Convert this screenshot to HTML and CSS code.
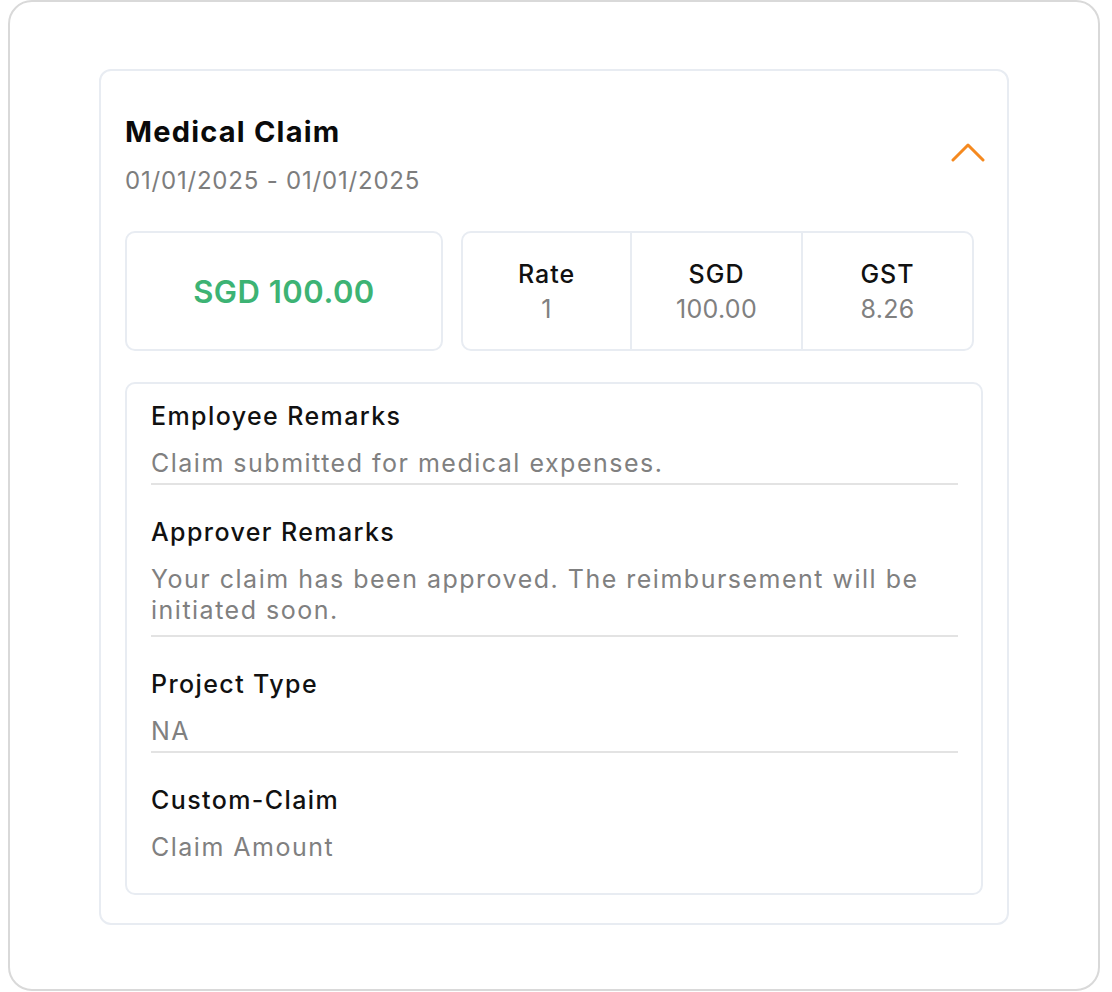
FILE: index.html
```html
<!DOCTYPE html>
<html lang="en">
<head>
<meta charset="utf-8">
<title>Medical Claim</title>
<link rel="stylesheet" href="styles.css">
</head>
<body>
<div class="frame">
  <section class="claim-card">
    <header class="claim-header">
      <div class="claim-heading">
        <h1 class="claim-title">Medical Claim</h1>
        <div class="claim-dates">01/01/2025 - 01/01/2025</div>
      </div>
      <svg class="chevron" width="34" height="19" viewBox="0 0 34 19" aria-hidden="true">
        <polyline points="2,17 17,2 32,17" fill="none" stroke="#f5891f" stroke-width="3" stroke-linecap="round" stroke-linejoin="round"/>
      </svg>
    </header>

    <div class="summary-row">
      <div class="amount-box">SGD 100.00</div>
      <div class="stats-box">
        <div class="stat">
          <div class="stat-label">Rate</div>
          <div class="stat-value">1</div>
        </div>
        <div class="stat">
          <div class="stat-label">SGD</div>
          <div class="stat-value">100.00</div>
        </div>
        <div class="stat">
          <div class="stat-label">GST</div>
          <div class="stat-value">8.26</div>
        </div>
      </div>
    </div>

    <div class="details-box">
      <div class="field">
        <div class="field-label">Employee Remarks</div>
        <div class="field-value">Claim submitted for medical expenses.</div>
      </div>
      <div class="field field-multi">
        <div class="field-label">Approver Remarks</div>
        <div class="field-value">Your claim has been approved. The reimbursement will be initiated soon.</div>
      </div>
      <div class="field">
        <div class="field-label">Project Type</div>
        <div class="field-value">NA</div>
      </div>
      <div class="field field-last">
        <div class="field-label">Custom-Claim</div>
        <div class="field-value">Claim Amount</div>
      </div>
    </div>
  </section>
</div>
</body>
</html>
```

FILE: styles.css
```css
* {
  box-sizing: border-box;
}

html, body {
  margin: 0;
  padding: 0;
  background: #ffffff;
}

body {
  font-family: "Inter", "Liberation Sans", sans-serif;
  color: #111111;
}

.frame {
  margin: 0 12px 0 8px;
  height: 991px;
  border: 2px solid #d9d9d9;
  border-radius: 24px;
  padding-top: 67px;
  background: #ffffff;
}

.claim-card {
  width: 910px;
  margin: 0 auto;
  border: 2px solid #e8ecf2;
  border-radius: 12px;
  padding: 43px 24px 28px 24px;
}

.claim-header {
  display: flex;
  justify-content: space-between;
  align-items: center;
}

.claim-title {
  margin: 0;
  font-size: 29px;
  line-height: 36px;
  font-weight: 700;
  letter-spacing: 1.2px;
  color: #0a0a0a;
}

.claim-dates {
  margin-top: 15px;
  font-size: 24px;
  line-height: 32px;
  letter-spacing: 0.8px;
  color: #7d7d7d;
}

.chevron {
  display: block;
  margin-right: -2px;
  margin-bottom: 6px;
}

.summary-row {
  display: grid;
  grid-template-columns: 318px 1fr;
  column-gap: 18px;
  padding-right: 9px;
  margin-top: 34px;
}

.amount-box {
  height: 120px;
  border: 2px solid #e8ecf2;
  border-radius: 10px;
  display: flex;
  align-items: center;
  justify-content: center;
  font-size: 31px;
  font-weight: 600;
  letter-spacing: 0.5px;
  color: #3db374;
}

.stats-box {
  height: 120px;
  border: 2px solid #e8ecf2;
  border-radius: 10px;
  display: grid;
  grid-template-columns: 167px 1fr 1fr;
}

.stat {
  display: flex;
  flex-direction: column;
  align-items: center;
  justify-content: center;
}

.stat + .stat {
  border-left: 2px solid #e8ecf2;
}

.stat-label {
  font-size: 25px;
  line-height: 30px;
  font-weight: 500;
  letter-spacing: 1px;
  color: #111111;
}

.stat-value {
  margin-top: 5px;
  font-size: 25px;
  line-height: 30px;
  letter-spacing: 0.3px;
  color: #808080;
}

.details-box {
  margin-top: 31px;
  border: 2px solid #e8ecf2;
  border-radius: 10px;
  padding: 17px 23px 31px 24px;
}

.field + .field {
  margin-top: 32px;
}

.field {
  border-bottom: 2px solid #e3e3e3;
  padding-bottom: 5px;
}

.field-multi {
  padding-bottom: 9px;
}

.field-multi .field-value {
  line-height: 31px;
}

.field-last {
  border-bottom: none;
  padding-bottom: 0;
}

.field-label {
  font-size: 25px;
  line-height: 30px;
  font-weight: 500;
  letter-spacing: 1.4px;
  color: #111111;
}

.field-value {
  margin-top: 17px;
  font-size: 25px;
  line-height: 30px;
  letter-spacing: 1.5px;
  color: #808080;
}
```
